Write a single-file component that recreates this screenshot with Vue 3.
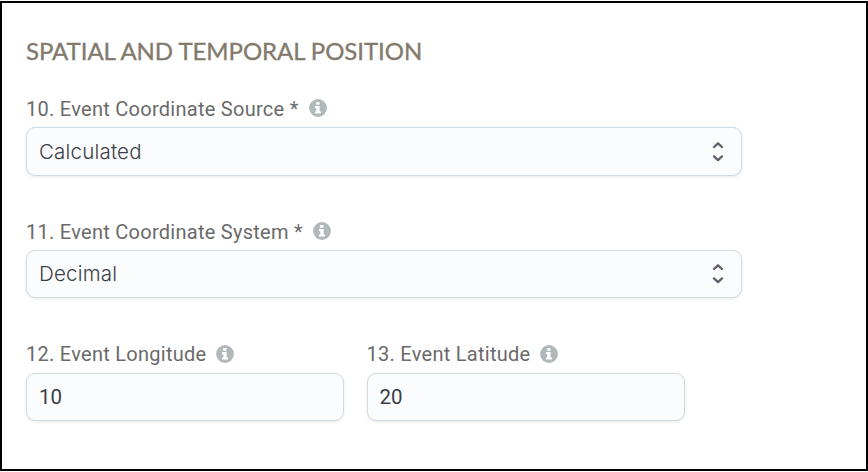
<script setup>
const selects = [
  { label: '10. Event Coordinate Source *', value: 'Calculated' },
  { label: '11. Event Coordinate System *', value: 'Decimal' },
]
const inputs = [
  { label: '12. Event Longitude', value: '10' },
  { label: '13. Event Latitude', value: '20' },
]
</script>

<template>
  <main class="panel">
    <h2 class="title"><span>SPATIAL AND TEMPORAL POSITION</span></h2>
    <section v-for="(s, i) in selects" :key="s.label" class="field wide" :class="'row' + i">
      <div class="label">
        <span>{{ s.label }}</span>
        <svg class="info" viewBox="0 0 18 18"><circle cx="9" cy="9" r="8.9" fill="#b1b8ba" /><path d="M7.2 2.9h3.3v2.8H7.2zM6 7h4.6v5.4h1.4v2.2H6v-2.2h1.3V9.2H6z" fill="#fff" /></svg>
      </div>
      <div class="box select">
        <span>{{ s.value }}</span>
        <svg class="arrows" viewBox="0 0 12 22"><path d="M2 6 6 2.3 10 6M2 15.4l4 3.7 4-3.7" fill="none" stroke="#5c626b" stroke-width="2.3" stroke-linecap="round" stroke-linejoin="round" /></svg>
      </div>
    </section>
    <div class="pair">
      <section v-for="f in inputs" :key="f.label" class="field">
        <div class="label">
          <span>{{ f.label }}</span>
          <svg class="info" viewBox="0 0 18 18"><circle cx="9" cy="9" r="8.9" fill="#b1b8ba" /><path d="M7.2 2.9h3.3v2.8H7.2zM6 7h4.6v5.4h1.4v2.2H6v-2.2h1.3V9.2H6z" fill="#fff" /></svg>
        </div>
        <div class="box number"><span>{{ f.value }}</span></div>
      </section>
    </div>
  </main>
</template>

<style>
body { background: #fff; }
</style>

<style scoped>
.panel {
  box-sizing: border-box;
  width: 868px;
  height: 470px;
  margin-top: 1px;
  border: 2px solid #000;
  padding: 32px 24px 0;
  background: #fff;
  font-family: Roboto, sans-serif;
  display: flow-root;
}
.title {
  margin: 0;
  height: 61px;
  font: 400 24px/32px Lato, sans-serif;
  letter-spacing: -0.06px;
  -webkit-text-stroke: 0.35px #827a6c;
  color: #827a6c;
  white-space: nowrap;
}
.field { width: 318px; }
.wide { width: 716px; height: 123px; }
.row1 { height: 122px; }
.label {
  display: flex;
  align-items: flex-start;
  gap: 10px;
  height: 31px;
  box-sizing: border-box;
  font-size: 20px;
  letter-spacing: 0.27px;
  line-height: 26px;
  color: #6a6a6a;
  white-space: nowrap;
}
.pair .label { height: 32px; }
.info { width: 18px; height: 18px; margin-top: 3px; flex: none; }
.pair .info { margin-top: 4px; }
.box {
  box-sizing: border-box;
  height: 49px;
  border: 1px solid #d1dae5;
  border-radius: 9px;
  background: #fbfcfe;
  box-shadow: 0 1px 3px rgba(40, 50, 70, 0.1);
  display: flex;
  align-items: center;
  justify-content: space-between;
  padding: 0 17px 0 12px;
  color: #3a3e47;
}
.select { font: 300 20.5px/28px Inter, sans-serif; letter-spacing: 0.2px; }
.row1 .box { height: 48px; }
.number { height: 48px; font-size: 20.5px; }
.arrows { width: 12px; height: 22px; flex: none; }
.pair { display: flex; gap: 22.5px; }
</style>
